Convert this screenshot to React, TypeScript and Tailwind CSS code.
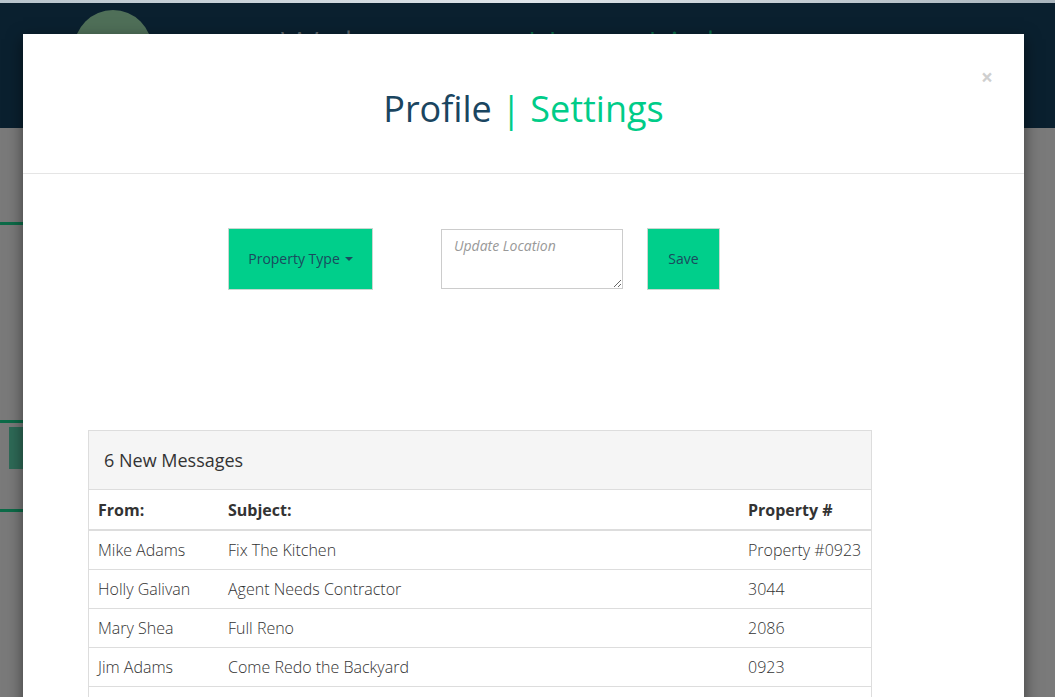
import React from 'react';

const messages = [
  { from: 'Mike Adams', subject: 'Fix The Kitchen', property: 'Property #0923' },
  { from: 'Holly Galivan', subject: 'Agent Needs Contractor', property: '3044' },
  { from: 'Mary Shea', subject: 'Full Reno', property: '2086' },
  { from: 'Jim Adams', subject: 'Come Redo the Backyard', property: '0923' },
  { from: '', subject: '', property: '' },
];

function Backdrop() {
  return (
    <div className="h-[697px] overflow-hidden bg-[#7a7a7a]">
      <div className="h-[3px] bg-gradient-to-r from-[#b8c4cc] via-[#dfe5ea] to-[#aab6be]" />
      <div className="relative h-[125px] bg-[#0a202f]">
        <div className="absolute left-[74px] top-[7px] h-[78px] w-[78px] rounded-full bg-[#4f6f58]" />
        <div className="absolute left-[280px] top-[11px] text-[44px] font-light text-[#5f676c]">
          Welcome to <span className="text-[#0c6b48]">HomeLinks</span>
        </div>
      </div>
      <div className="mt-[94px] h-[3px] w-[60px] bg-[#0c6b48]" />
      <div className="mt-[195px] h-[3px] w-[60px] bg-[#0c6b48]" />
      <div className="ml-[9px] mt-[4px] h-[42px] w-[40px] bg-[#2e6a57]" />
      <div className="mt-[40px] h-[3px] w-[60px] bg-[#0c6b48]" />
    </div>
  );
}

export default function App() {
  return (
    <div className="relative h-[697px] overflow-hidden font-['Open_Sans',sans-serif]">
      <Backdrop />
      <div className="absolute left-[23px] top-[34px] h-[700px] w-[1001px] bg-white shadow-[0_5px_15px_rgba(0,0,0,0.5)]">
        <div className="relative flex h-[140px] items-center justify-center border-b border-[#e5e5e5]">
          <h1 className="pt-[11px] text-[36px] font-normal text-[#1a4560]">
            Profile <span className="text-[#00cc88]">| Settings</span>
          </h1>
          <button className="absolute right-[31px] top-[33px] text-[21px] font-bold leading-none text-[#cfcfcf]">
            ×
          </button>
        </div>
        <div className="flex items-start pl-[205px] pt-[54px]">
          <button className="flex h-[62px] w-[145px] items-center justify-center gap-[5px] border border-[#c8d8d0] bg-[#00cf8b] pb-[2px] text-[14px] text-[#1b4a5e]">
            Property Type
            <span className="mt-[2px] h-0 w-0 border-x-[4px] border-t-[4px] border-x-transparent border-t-[#1b4a5e]" />
          </button>
          <textarea
            placeholder="Update Location"
            className="ml-[68px] mt-[1px] h-[60px] w-[182px] border border-[#cccccc] px-[12px] py-[5px] text-[14px] italic placeholder:text-[#999999] focus:outline-none"
          />
          <button className="ml-[24px] h-[62px] w-[73px] border border-[#c8d8d0] bg-[#00cf8b] pb-[2px] text-[14px] text-[#1b4a5e]">
            Save
          </button>
        </div>
        <div className="ml-[65px] mt-[140px] w-[784px] border border-[#dddddd]">
          <div className="flex h-[59px] items-center border-b border-[#dddddd] bg-[#f5f5f5] px-[15px] text-[18px] font-normal text-[#333333]">
            6 New Messages
          </div>
          <table className="w-full border-collapse text-left text-[16px] text-[#333333]">
            <thead>
              <tr className="h-[40px] border-b-2 border-[#dddddd]">
                <th className="w-[130px] pl-[9px] pr-[8px] font-bold">From:</th>
                <th className="w-[520px] pl-[9px] pr-[8px] font-bold">Subject:</th>
                <th className="pl-[9px] pr-[8px] font-bold">Property #</th>
              </tr>
            </thead>
            <tbody className="font-light">
              {messages.map((m, i) => (
                <tr key={i} className="h-[39px] border-b border-[#dddddd]">
                  <td className="pl-[9px] pr-[8px]">{m.from}</td>
                  <td className="pl-[9px] pr-[8px]">{m.subject}</td>
                  <td className="pl-[9px] pr-[8px]">{m.property}</td>
                </tr>
              ))}
            </tbody>
          </table>
        </div>
      </div>
    </div>
  );
}
